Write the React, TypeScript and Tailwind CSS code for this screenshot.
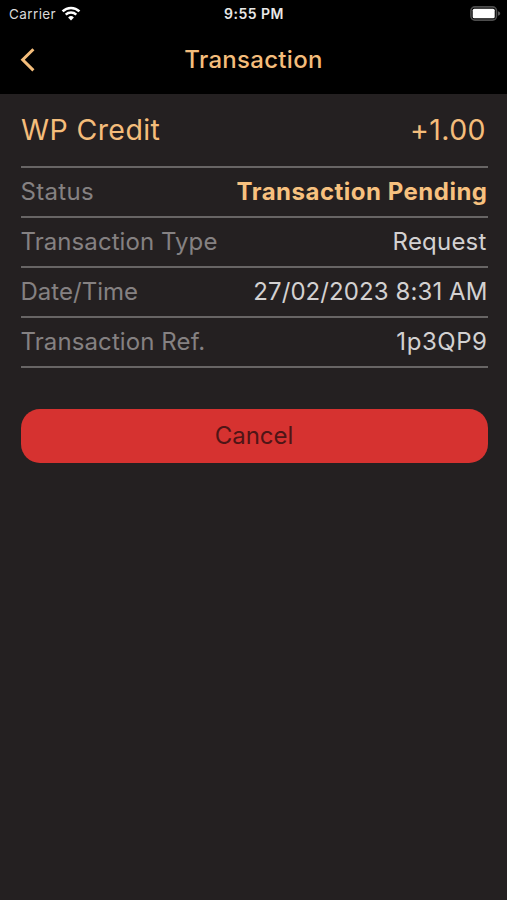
import { clsx } from "clsx";

type Detail = {
    label: string;
    value: string;
    labelClass: string;
    valueClass: string;
};

const details: Detail[] = [
    {
        label: "Status",
        value: "Transaction Pending",
        labelClass: "tracking-[0.3px]",
        valueClass: "font-bold tracking-[0.5px] text-[#f7c17f]",
    },
    {
        label: "Transaction Type",
        value: "Request",
        labelClass: "tracking-[0.07px]",
        valueClass: "pr-px tracking-[0.2px] text-[#d3d1d1]",
    },
    {
        label: "Date/Time",
        value: "27/02/2023 8:31 AM",
        labelClass: "tracking-[0.02px]",
        valueClass: "tracking-[0.09px] text-[#d3d1d1]",
    },
    {
        label: "Transaction Ref.",
        value: "1p3QP9",
        labelClass: "tracking-[0.1px]",
        valueClass: "tracking-[0.55px] text-[#d3d1d1]",
    },
];

function WifiIcon() {
    return (
        <svg width="20" height="15" viewBox="0 0 20 15" fill="none">
            <path d="M1.600 5.400a12 12 0 0 1 16.800 0" stroke="#fff" strokeWidth="2.6" />
            <path d="M4.700 8.600a7.600 7.600 0 0 1 10.600 0" stroke="#fff" strokeWidth="2.4" />
            <path d="M10 14.400l-2.900-2.900a4.100 4.100 0 0 1 5.800 0z" fill="#fff" />
        </svg>
    );
}

function BatteryIcon() {
    return (
        <svg width="31" height="15" viewBox="0 0 31 15" fill="none">
            <rect x="0.9" y="0.9" width="25.6" height="13.2" rx="4" stroke="#4d4d4d" strokeWidth="1.6" />
            <rect x="2.7" y="2.7" width="22" height="9.6" rx="1.6" fill="#fff" />
            <path d="M28 5.200c1.600.5 2.200 1.300 2.200 2.300s-.6 1.800-2.200 2.300z" fill="#5a5a5a" />
        </svg>
    );
}

export default function App() {
    return (
        <div className="h-[900px] w-[507px] overflow-hidden bg-[#242021] font-['Inter',sans-serif]">

            {/* HEADER */}
            <header className="h-[94px] bg-black">

                {/* STATUS BAR */}
                <div className="grid h-[27px] grid-cols-3 items-center pr-[6px] pl-[9px] text-[13.5px] text-[#d9d9d9]">
                    <div className="flex items-center gap-[5px]">
                        <span className="pt-[2px] tracking-[0.4px]">Carrier</span>
                        <WifiIcon />
                    </div>
                    <span className="pr-[2px] text-center text-[14px] font-semibold tracking-[0.5px] text-[#e8e8e8]">9:55 PM</span>
                    <div className="flex justify-end">
                        <BatteryIcon />
                    </div>
                </div>

                {/* NAV BAR */}
                <div className="grid h-[66px] grid-cols-[60px_1fr_60px] items-center">
                    <button className="pl-[19.5px]" aria-label="Back">
                        <svg width="16" height="26" viewBox="0 0 16 26" fill="none">
                            <path d="M13.400 2.200L2.700 12.800l10.700 10.600" stroke="#f4bd7b" strokeWidth="3" />
                        </svg>
                    </button>
                    <h1 className="text-center text-[24px] font-medium tracking-[0.3px] text-[#f4bd7b]">Transaction</h1>
                </div>
            </header>

            <main className="pr-[19.5px] pl-[20.5px]">

                {/* AMOUNT */}
                <div className="flex h-[74px] items-center justify-between border-b-2 border-[#686565] pt-px pr-[1.5px] pl-[0.5px] text-[28.5px] tracking-[0.4px] text-[#f4bd7b]">
                    <span>WP Credit</span>
                    <span>+1.00</span>
                </div>

                {/* DETAILS */}
                {details.map((detail) => (
                    <div
                        key={detail.label}
                        className="flex h-[50px] items-center justify-between border-b-2 border-[#686565] text-[24px]"
                    >
                        <span className={clsx("text-[#858182]", detail.labelClass)}>{detail.label}</span>
                        <span className={detail.valueClass}>{detail.value}</span>
                    </div>
                ))}

                {/* CANCEL */}
                <button className="mt-[41px] flex h-[54px] w-full items-center justify-center rounded-[19px] bg-[#d63230] text-[24px] text-[#4f1516]">
                    Cancel
                </button>
            </main>
        </div>
    );
}
